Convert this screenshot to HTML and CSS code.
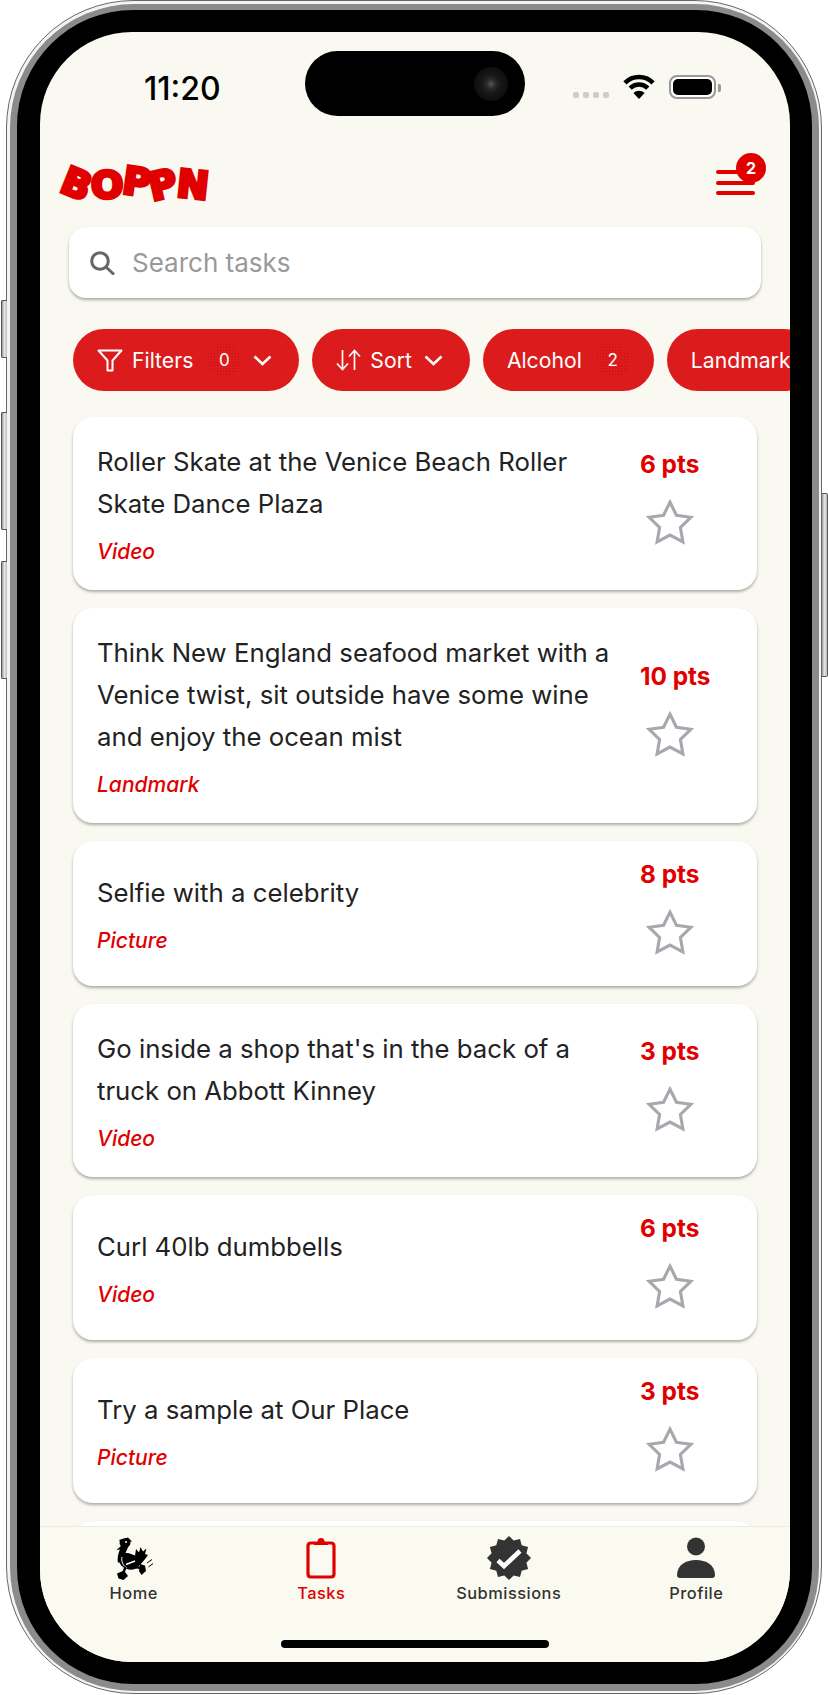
FILE: index.html
```html
<!DOCTYPE html>
<html lang="en">
<head>
  <meta charset="UTF-8" />
  <meta name="viewport" content="width=device-width, initial-scale=1.0"/>
  <title>BOPPN — Tasks</title>
  <link rel="stylesheet" href="styles.css">
</head>
<body>
  <div class="phone">
    <span class="side-btn btn-mute"></span>
    <span class="side-btn btn-up"></span>
    <span class="side-btn btn-down"></span>
    <span class="side-btn btn-power"></span>

    <div class="steel">
      <div class="bezel">
        <div class="screen">

          <div class="status-bar">
            <span class="time">11:20</span>
            <div class="island"><span class="camera"></span></div>
            <div class="signal"><i></i><i></i><i></i><i></i></div>
            <svg class="wifi" viewBox="0 0 32 25" width="32" height="25">
              <path d="M1.9 8.9A20 20 0 0 1 30.1 8.9" fill="none" stroke="#000" stroke-width="4.5"/>
              <path d="M7.2 14.2A12.5 12.5 0 0 1 24.8 14.2" fill="none" stroke="#000" stroke-width="4.5"/>
              <path d="M16 25L10.4 19A8 8 0 0 1 21.6 19Z" fill="#000"/>
            </svg>
            <div class="battery"><span></span></div>
            <span class="battery-nub"></span>
          </div>

          <header class="top">
            <div class="logo">
              <span class="l-b">B</span><span class="l-o">O</span><span class="l-p1">P</span><span class="l-p2">P</span><span class="l-n">N</span>
            </div>
            <div class="menu">
              <i></i><i></i><i></i>
              <span class="menu-badge">2</span>
            </div>
          </header>

          <div class="search">
            <svg viewBox="0 0 25 24" width="25" height="24">
              <circle cx="10" cy="10" r="8.3" fill="none" stroke="#666" stroke-width="3"/>
              <path d="M16 16L24 23.5" stroke="#666" stroke-width="3"/>
            </svg>
            <span>Search tasks</span>
          </div>

          <div class="chips">
            <div class="chip">
              <svg viewBox="0 0 26 23" width="26" height="23">
                <path d="M1.5 1.5H24.5L15.5 11.5V21.5H10.5V11.5Z" fill="none" stroke="#fff" stroke-width="2" stroke-linejoin="round"/>
              </svg>
              <span class="chip-label">Filters</span>
              <span class="count">0</span>
              <svg class="chev" viewBox="0 0 19 11" width="19" height="11">
                <path d="M1.5 1.5L9.5 9L17.5 1.5" fill="none" stroke="#fff" stroke-width="2.6"/>
              </svg>
            </div>
            <div class="chip">
              <svg viewBox="0 0 25 22" width="25" height="22">
                <path d="M6.5 1V20M1 14.5L6.5 20.5L12 14.5M18.5 21V2M13 7.5L18.5 1.5L24 7.5" fill="none" stroke="#fff" stroke-width="1.7"/>
              </svg>
              <span class="chip-label">Sort</span>
              <svg class="chev" viewBox="0 0 19 11" width="19" height="11">
                <path d="M1.5 1.5L9.5 9L17.5 1.5" fill="none" stroke="#fff" stroke-width="2.6"/>
              </svg>
            </div>
            <div class="chip">
              <span class="chip-label">Alcohol</span>
              <span class="count">2</span>
            </div>
            <div class="chip">
              <span class="chip-label">Landmark</span>
            </div>
          </div>

          <main class="tasks">
            <div class="task">
              <div class="task-info">
                <p class="task-title">Roller Skate at the Venice Beach Roller Skate Dance Plaza</p>
                <p class="task-tag">Video</p>
              </div>
              <div class="task-side">
                <span class="pts">6 pts</span>
                <div class="star"><svg viewBox="0 0 24 24" width="50" height="50"><polygon points="12 2 15.09 8.26 22 9.27 17 14.14 18.18 21.02 12 17.77 5.82 21.02 7 14.14 2 9.27 8.91 8.26"/></svg></div>
              </div>
            </div>

            <div class="task">
              <div class="task-info">
                <p class="task-title">Think New England seafood market with a Venice twist, sit outside have some wine and enjoy the ocean mist</p>
                <p class="task-tag">Landmark</p>
              </div>
              <div class="task-side">
                <span class="pts">10 pts</span>
                <div class="star"><svg viewBox="0 0 24 24" width="50" height="50"><polygon points="12 2 15.09 8.26 22 9.27 17 14.14 18.18 21.02 12 17.77 5.82 21.02 7 14.14 2 9.27 8.91 8.26"/></svg></div>
              </div>
            </div>

            <div class="task">
              <div class="task-info">
                <p class="task-title">Selfie with a celebrity</p>
                <p class="task-tag">Picture</p>
              </div>
              <div class="task-side">
                <span class="pts">8 pts</span>
                <div class="star"><svg viewBox="0 0 24 24" width="50" height="50"><polygon points="12 2 15.09 8.26 22 9.27 17 14.14 18.18 21.02 12 17.77 5.82 21.02 7 14.14 2 9.27 8.91 8.26"/></svg></div>
              </div>
            </div>

            <div class="task">
              <div class="task-info">
                <p class="task-title">Go inside a shop that's in the back of a truck on Abbott Kinney</p>
                <p class="task-tag">Video</p>
              </div>
              <div class="task-side">
                <span class="pts">3 pts</span>
                <div class="star"><svg viewBox="0 0 24 24" width="50" height="50"><polygon points="12 2 15.09 8.26 22 9.27 17 14.14 18.18 21.02 12 17.77 5.82 21.02 7 14.14 2 9.27 8.91 8.26"/></svg></div>
              </div>
            </div>

            <div class="task">
              <div class="task-info">
                <p class="task-title">Curl 40lb dumbbells</p>
                <p class="task-tag">Video</p>
              </div>
              <div class="task-side">
                <span class="pts">6 pts</span>
                <div class="star"><svg viewBox="0 0 24 24" width="50" height="50"><polygon points="12 2 15.09 8.26 22 9.27 17 14.14 18.18 21.02 12 17.77 5.82 21.02 7 14.14 2 9.27 8.91 8.26"/></svg></div>
              </div>
            </div>

            <div class="task">
              <div class="task-info">
                <p class="task-title">Try a sample at Our Place</p>
                <p class="task-tag">Picture</p>
              </div>
              <div class="task-side">
                <span class="pts">3 pts</span>
                <div class="star"><svg viewBox="0 0 24 24" width="50" height="50"><polygon points="12 2 15.09 8.26 22 9.27 17 14.14 18.18 21.02 12 17.77 5.82 21.02 7 14.14 2 9.27 8.91 8.26"/></svg></div>
              </div>
            </div>

            <!-- next row is cut off by the tab bar -->
            <div class="task task-cut"></div>
          </main>

          <nav class="tabbar">
            <div class="tabs">
              <div class="tab tab-home">
                <svg viewBox="0 0 42 44" width="42" height="44">
                  <ellipse cx="14" cy="7" rx="5.5" ry="4.6"/>
                  <path d="M8 4L17 1.5L21 5.5L10 7Z"/>
                  <path d="M11 9L5.5 14L13 13Z"/>
                  <path d="M14 10C12 15 9 19 10 26" fill="none" stroke="#000" stroke-width="6.5"/>
                  <path d="M7.5 24C9 17 16 16 20 18L24 19.5L25 13L28 16.5L29.5 11L32 15.5L35.5 12.5L34 18L37 19C33.5 24 30.5 27 27 31C22 36 10 34 7.5 24Z"/>
                  <path d="M15 28.5L24 25" stroke="#fff" stroke-width="1.5" fill="none"/>
                  <path d="M11 21C10 25 12 30 16 32" stroke="#fff" stroke-width="1" fill="none"/>
                  <circle cx="15" cy="6" r="1" fill="#fff"/>
                  <path d="M14.5 31L12.5 36.5M24 31L30 32" stroke="#000" stroke-width="2.4" fill="none"/>
                  <path d="M6 37.5L13 34.5L17 40L12.5 44L7.5 42.5Z"/>
                  <path d="M29 28L34 29.5L35 35L30.5 39L28 35Z"/>
                  <path d="M36 27L41 23.5M37.5 31L42 27.5" stroke="#000" stroke-width="1" fill="none"/>
                </svg>
                <span>Home</span>
              </div>
              <div class="tab active">
                <svg viewBox="0 0 30 42" width="30" height="44">
                  <path d="M8 6H5Q2 6 2 9V37Q2 40 5 40H25Q28 40 28 37V9Q28 6 25 6H22" fill="none" stroke="#e00000" stroke-width="3.2"/>
                  <path d="M8 8V4.5H11.5A3.5 3.5 0 0 1 18.5 4.5H22V8Z" fill="#e00000"/>
                </svg>
                <span>Tasks</span>
              </div>
              <div class="tab">
                <svg viewBox="0 0 44 44" width="44" height="44">
                  <polygon fill="#333" points="44,22 39.4,26.7 41.1,33 34.7,34.7 33,41.1 26.7,39.4 22,44 17.3,39.4 11,41.1 9.3,34.7 2.9,33 4.6,26.7 0,22 4.6,17.3 2.9,11 9.3,9.3 11,2.9 17.3,4.6 22,0 26.7,4.6 33,2.9 34.7,9.3 41.1,11 39.4,17.3"/>
                  <path d="M11 24.5L17 30L33 15" fill="none" stroke="#fff" stroke-width="4.6"/>
                </svg>
                <span>Submissions</span>
              </div>
              <div class="tab">
                <svg viewBox="0 0 38 42" width="38" height="44">
                  <circle cx="19" cy="9.5" r="9" fill="#333"/>
                  <path d="M0 38C0 28 9 23 19 23S38 28 38 38Q38 41 35 41H3Q0 41 0 38Z" fill="#333"/>
                </svg>
                <span>Profile</span>
              </div>
            </div>
            <div class="home-bar"></div>
          </nav>

        </div>
      </div>
    </div>
  </div>
</body>
</html>
```

FILE: styles.css
```css
:root {
  --bg: #f9f9f1;
  --tab-bg: #fbfaf0;
  --red: #e00000;
  --chip: #dc1c1c;
  --text: #222;
  --dark: #333;
}

* {
  margin: 0;
  padding: 0;
  box-sizing: border-box;
  font-family: 'Inter', 'Liberation Sans', sans-serif;
}

body {
  background: #fff;
  width: 828px;
  height: 1695px;
  overflow: hidden;
}

/* device frame */
.phone {
  position: relative;
  width: 816px;
  height: 1694px;
  margin: 0 0 0 6px;
  padding: 3px 2px 2px 3px;
  background: #f4f4f2;
  border: 1px solid #666;
  border-radius: 128px;
}

.steel {
  height: 100%;
  padding: 6px 7px 7px 7px;
  background: #8b8b8b;
  border-radius: 124px;
}

.bezel {
  height: 100%;
  padding: 22px 22px 22px 23px;
  background: #000;
  border-radius: 116px;
}

.screen {
  display: flex;
  flex-direction: column;
  height: 100%;
  background: var(--bg);
  border-radius: 92px;
  overflow: hidden;
}

.side-btn {
  position: absolute;
  width: 6px;
  background: linear-gradient(to right, #999, #e4e4de 50%, #bbb);
  border: 1px solid #555;
  border-right: none;
  border-radius: 2px 0 0 2px;
}

.btn-mute { left: -6px; top: 299px; height: 58px; }
.btn-up { left: -6px; top: 411px; height: 118px; }
.btn-down { left: -6px; top: 560px; height: 118px; }

.btn-power {
  left: auto;
  right: -7px;
  top: 492px;
  height: 184px;
  border: 1px solid #555;
  border-left: none;
  border-radius: 0 2px 2px 0;
}

/* status bar */
.status-bar {
  display: flex;
  align-items: flex-start;
  height: 120px;
  padding: 19px 0 0 104px;
  flex-shrink: 0;
}

.time {
  width: 75px;
  margin-top: 20px;
  font-size: 32px;
  line-height: 36px;
  font-weight: 500;
  color: #000;
  white-space: nowrap;
}

.island {
  display: flex;
  align-items: center;
  justify-content: flex-end;
  width: 220px;
  height: 65px;
  margin-left: 86px;
  padding-right: 17px;
  background: #000;
  border-radius: 33px;
}

.camera {
  width: 34px;
  height: 34px;
  border-radius: 50%;
  background: radial-gradient(circle, #555 0, #2c2c2c 18%, #181818 38%, #0e0e0e 70%, #070707 100%);
}

.signal {
  display: flex;
  gap: 4px;
  margin: 41px 0 0 48px;
}

.signal i {
  width: 6px;
  height: 6px;
  background: #ccc;
  border-radius: 2px;
}

.wifi {
  margin: 23px 0 0 14px;
}

.battery {
  width: 47px;
  height: 24px;
  margin: 24px 0 0 14px;
  padding: 2px;
  background: #fff;
  border: 2px solid #999;
  border-radius: 8px;
}

.battery span {
  display: block;
  height: 100%;
  background: #000;
  border-radius: 5px;
}

.battery-nub {
  width: 3px;
  height: 8px;
  margin: 33px 0 0 2px;
  background: #999;
  border-radius: 0 2px 2px 0;
}

/* header */
.top {
  display: flex;
  justify-content: space-between;
  align-items: flex-start;
  height: 75px;
  padding: 0 35px 0 19px;
  flex-shrink: 0;
}

.logo {
  display: flex;
  width: 150px;
  height: 38px;
  margin-top: 12px;
}

.logo span {
  display: block;
  font-family: 'DejaVu Sans', sans-serif;
  font-size: 38px;
  line-height: 38px;
  font-weight: 700;
  color: var(--red);
  -webkit-text-stroke: 3.6px var(--red);
}

.l-b { transform: translate(3px, 1px) rotate(22deg); }
.l-o { transform: translate(3px, 2px); }
.l-p1 { transform: translate(3px, -1px) rotate(8deg); }
.l-p2 { transform: translate(1px, 2px) rotate(-13deg); }
.l-n { transform: translate(1px, 2px) rotate(6deg); }

.menu {
  position: relative;
  display: flex;
  flex-direction: column;
  gap: 6.5px;
  width: 39px;
  margin-top: 18px;
}

.menu i {
  display: block;
  height: 4px;
  background: var(--red);
  border-radius: 2px;
}

.menu-badge {
  position: absolute;
  top: -17px;
  left: 20px;
  width: 30px;
  height: 30px;
  border-radius: 50%;
  background: var(--red);
  color: #fff;
  font-size: 16px;
  line-height: 30px;
  font-weight: 700;
  text-align: center;
}

/* search */
.search {
  display: flex;
  align-items: center;
  gap: 17px;
  height: 71px;
  margin: 0 29px;
  padding-left: 21px;
  background: #fff;
  border-radius: 17px;
  box-shadow: 0 2px 3px rgba(0, 0, 0, 0.3);
  font-size: 26px;
  color: #999;
  flex-shrink: 0;
}

/* filter chips */
.chips {
  display: flex;
  gap: 13px;
  margin-top: 31px;
  padding-left: 33px;
  overflow: hidden;
  flex-shrink: 0;
}

.chip {
  display: flex;
  align-items: center;
  height: 62px;
  padding: 0 24px;
  background: var(--chip);
  border-radius: 31px;
  color: #fff;
  font-size: 21.2px;
  font-weight: 400;
  white-space: nowrap;
  flex-shrink: 0;
}

.chip svg {
  flex-shrink: 0;
}

.chip-label {
  margin-left: 9px;
}

.chip > .chip-label:first-child {
  margin-left: 0;
}

.count {
  width: 34px;
  height: 34px;
  margin-left: 14px;
  border-radius: 50%;
  background: radial-gradient(circle, #bf1212 0.8px, transparent 1px) 0 0 / 3px 3px;
  font-size: 17px;
  line-height: 34px;
  text-align: center;
}

.chev {
  margin: 0 3px 0 12px;
}

/* task list */
.tasks {
  display: flex;
  flex-direction: column;
  gap: 18px;
  flex: 1;
  min-height: 0;
  margin-top: 26px;
  padding: 0 33px;
  overflow: hidden;
}

.task {
  display: flex;
  padding: 14px 24px;
  background: #fff;
  border-radius: 20px;
  box-shadow: 0 2px 3px rgba(0, 0, 0, 0.3);
  flex-shrink: 0;
}

.task-cut {
  min-height: 145px;
}

.task-info {
  flex: 1;
  align-self: center;
  padding: 10px 14px 10px 0;
}

.task-title {
  font-size: 25.75px;
  line-height: 42px;
  color: var(--text);
}

.task-tag {
  margin-top: 12px;
  font-size: 21px;
  line-height: 29px;
  font-style: italic;
  font-weight: 500;
  color: var(--red);
}

.task-side {
  display: flex;
  flex-direction: column;
  justify-content: center;
  width: 93px;
  flex-shrink: 0;
}

.pts {
  font-size: 24.4px;
  line-height: 38px;
  font-weight: 700;
  color: var(--red);
}

.star {
  display: flex;
  align-items: center;
  justify-content: center;
  width: 59px;
  height: 79px;
}

.star svg {
  flex-shrink: 0;
}

.star polygon {
  fill: none;
  stroke: #a5a8ac;
  stroke-width: 1.5;
}

/* bottom tabs */
.tabbar {
  display: flex;
  flex-direction: column;
  height: 136px;
  padding-top: 9px;
  background: var(--tab-bg);
  border-top: 1px solid #ecece6;
  flex-shrink: 0;
}

.tabs {
  display: grid;
  grid-template-columns: repeat(4, 1fr);
}

.tab {
  display: flex;
  flex-direction: column;
  align-items: center;
  color: var(--dark);
  font-size: 16.4px;
  line-height: 22px;
  font-weight: 500;
  letter-spacing: 0.5px;
}

.tab.active {
  color: var(--red);
}

.tab svg {
  margin-bottom: 2px;
}

.tab-home svg {
  margin-right: 4px;
}

.home-bar {
  width: 268px;
  height: 8px;
  margin: auto auto 14px;
  background: #000;
  border-radius: 4px;
}
```
